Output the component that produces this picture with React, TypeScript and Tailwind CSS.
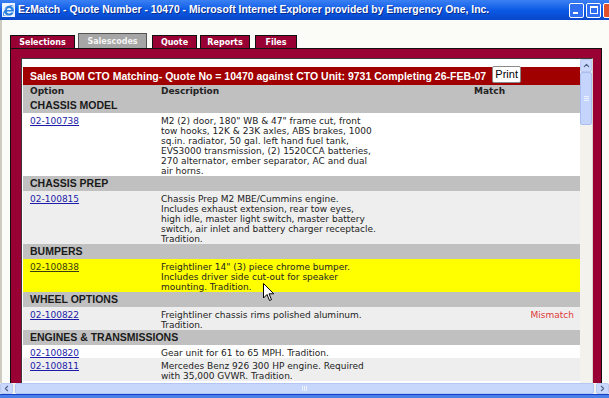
import { ChevronUp, ChevronLeft, ChevronRight } from "lucide-react";
import { FaInternetExplorer } from "react-icons/fa";

type Item = { code: string; lines: string[]; bg: string; link: string; match?: string };
type Section = { title: string; items: Item[] };

const sections: Section[] = [
  {
    title: "CHASSIS MODEL",
    items: [
      {
        code: "02-100738",
        bg: "bg-white",
        link: "text-[#1c1ca8]",
        lines: [
          'M2 (2) door, 180" WB & 47" frame cut, front',
          "tow hooks, 12K & 23K axles, ABS brakes, 1000",
          "sq.in. radiator, 50 gal. left hand fuel tank,",
          "EVS3000 transmission, (2) 1520CCA batteries,",
          "270 alternator, ember separator, AC and dual",
          "air horns.",
        ],
      },
    ],
  },
  {
    title: "CHASSIS PREP",
    items: [
      {
        code: "02-100815",
        bg: "bg-[#eeeeee]",
        link: "text-[#1c1ca8]",
        lines: [
          "Chassis Prep M2 MBE/Cummins engine.",
          "Includes exhaust extension, rear tow eyes,",
          "high idle, master light switch, master battery",
          "switch, air inlet and battery charger receptacle.",
          "Tradition.",
        ],
      },
    ],
  },
  {
    title: "BUMPERS",
    items: [
      {
        code: "02-100838",
        bg: "bg-[#ffff00]",
        link: "text-[#3a3a10]",
        lines: [
          'Freightliner 14" (3) piece chrome bumper.',
          "Includes driver side cut-out for speaker",
          "mounting. Tradition.",
        ],
      },
    ],
  },
  {
    title: "WHEEL OPTIONS",
    items: [
      {
        code: "02-100822",
        bg: "bg-[#eeeeee]",
        link: "text-[#1c1ca8]",
        match: "Mismatch",
        lines: ["Freightliner chassis rims polished aluminum.", "Tradition."],
      },
    ],
  },
  {
    title: "ENGINES & TRANSMISSIONS",
    items: [
      {
        code: "02-100820",
        bg: "bg-white",
        link: "text-[#1c1ca8]",
        lines: ["Gear unit for 61 to 65 MPH. Tradition."],
      },
      {
        code: "02-100811",
        bg: "bg-[#eeeeee]",
        link: "text-[#1c1ca8]",
        lines: ["Mercedes Benz 926 300 HP engine. Required", "with 35,000 GVWR. Tradition."],
      },
    ],
  },
];

const tabs = [
  { label: "Selections", cls: "w-[65px]" },
  { label: "Salescodes", cls: "ml-[3px] w-[69px]", active: true },
  { label: "Quote", cls: "ml-[5px] w-[45px]" },
  { label: "Reports", cls: "ml-[3px] w-[50px]" },
  { label: "Files", cls: "ml-[5px] w-[42px]" },
];

function Row({ item }: { item: Item }) {
  return (
    <div className={`grid grid-cols-[138px_313px_1fr] pt-[3px] text-[9px] leading-[10px] ${item.bg}`}>
      <div className="pl-[7px]">
        <a className={`underline ${item.link}`}>{item.code}</a>
      </div>
      <div className="text-[#222]">
        {item.lines.map((l, i) => (
          <div key={i} className="whitespace-nowrap">{l}</div>
        ))}
      </div>
      <div className="pr-[6px] text-right text-[#e03a3a]">{item.match}</div>
    </div>
  );
}

export default function App() {
  return (
    <div className="relative flex h-[398px] w-[609px] flex-col overflow-hidden bg-[#fbfbf8] font-['DejaVu_Sans',sans-serif]">
      {/* Title bar */}
      <div className="flex h-[20px] shrink-0 items-center bg-gradient-to-b from-[#3a80f3] via-[#0b5ae6] to-[#0847c9] pl-[2px]">
        <div className="flex h-[14px] w-[13px] items-center justify-center bg-[#eef4ff]">
          <FaInternetExplorer className="text-[#2b7fe0]" size={11} />
        </div>
        <span className="ml-[3px] whitespace-nowrap font-['Liberation_Sans',sans-serif] text-[10.4px] font-bold text-white [text-shadow:1px_1px_0_#0a2a8a]">
          EzMatch - Quote Number - 10470 - Microsoft Internet Explorer provided by Emergency One, Inc.
        </span>
        <div className="-mr-[9px] ml-auto flex items-center gap-[2px]">
          <div className="flex h-[15px] w-[15px] items-end rounded-[2px] border border-white bg-[#2f6ff0] pb-[3px] pl-[3px]">
            <div className="h-[2px] w-[5px] bg-white" />
          </div>
          <div className="flex h-[15px] w-[15px] items-center justify-center rounded-[2px] border border-white bg-[#2f6ff0]">
            <div className="h-[8px] w-[8px] border border-t-2 border-white" />
          </div>
          <div className="h-[15px] w-[15px] rounded-[2px] border border-white bg-[#e0512c]" />
        </div>
      </div>

      {/* Window body */}
      <div className="flex min-h-0 flex-1 flex-col border-l-2 border-[#cfcbc0] pl-[8px] pt-[13px]">
        {/* Tabs */}
        <div className="flex h-[15px] shrink-0 items-end">
          {tabs.map((t) =>
            t.active ? (
              <div
                key={t.label}
                className={`flex h-[15px] items-start justify-center border border-b-0 border-[#555] bg-[#a6a6a6] pt-[2px] text-[8px] font-bold text-[#f4f4f4] ${t.cls}`}
              >
                {t.label}
              </div>
            ) : (
              <div
                key={t.label}
                className={`flex h-[13px] items-center justify-center border border-b-0 border-[#111] bg-[#990033] pt-[1px] text-[8px] font-bold text-white ${t.cls}`}
              >
                {t.label}
              </div>
            )
          )}
        </div>

        {/* Maroon panel */}
        <div className="min-h-0 w-[592px] flex-1 overflow-hidden border border-b-0 border-[#111] bg-[#990033] pl-[10px] pt-[9px]">
          <div className="flex h-[400px] w-[572px] border-l border-t border-r border-[#3a3a3a] border-r-[#d8d4cc] bg-white">
            {/* Table */}
            <div className="ml-[1px] w-[557px] pt-[8px]">
              <div className="flex h-[18px] items-start bg-[#a00000] pl-[7px]">
                <span className="mt-[2px] whitespace-nowrap font-['Liberation_Sans',sans-serif] text-[10.5px] font-bold text-white">
                  Sales BOM CTO Matching- Quote No = 10470 against CTO Unit: 9731 Completing 26-FEB-07
                </span>
                <button className="-mt-[1px] ml-[6px] flex h-[17px] w-[29px] items-center justify-center rounded-[2px] border border-[#8a8a8a] bg-white font-['Liberation_Sans',sans-serif] text-[11px] text-black">
                  Print
                </button>
              </div>
              <div className="grid h-[13px] grid-cols-[138px_313px_1fr] items-center bg-[#c0c0c0] text-[9px] font-bold text-[#222]">
                <div className="pl-[7px]">Option</div>
                <div>Description</div>
                <div>Match</div>
              </div>
              {sections.map((s) => (
                <div key={s.title}>
                  <div className="flex h-[15px] items-center bg-[#c0c0c0] pl-[7px] font-['Liberation_Sans',sans-serif] text-[10.5px] font-bold text-[#1a1a1a]">
                    {s.title}
                  </div>
                  {s.items.map((it) => (
                    <Row key={it.code} item={it} />
                  ))}
                </div>
              ))}
            </div>

            {/* Vertical scrollbar */}
            <div className="flex w-[12px] flex-col bg-[#f3f2ec]">
              <div className="flex h-[13px] items-center justify-center rounded-[2px] border border-[#b9c9f0] bg-[#c9d8fc]">
                <ChevronUp size={9} strokeWidth={3} className="text-[#4d6185]" />
              </div>
              <div className="flex h-[53px] flex-col items-center justify-center gap-[1px] rounded-[2px] border border-[#a9bdf0] bg-[#c4d4fb]">
                <div className="h-px w-[5px] bg-[#eef3ff]" />
                <div className="h-px w-[5px] bg-[#eef3ff]" />
                <div className="h-px w-[5px] bg-[#eef3ff]" />
              </div>
            </div>
          </div>
        </div>
      </div>

      {/* Horizontal scrollbar */}
      <div className="flex h-[11px] shrink-0 bg-[#f3f2ec]">
        <div className="flex w-[13px] items-center justify-center rounded-[2px] border border-[#b9c9f0] bg-[#c9d8fc]">
          <ChevronLeft size={9} strokeWidth={3} className="text-[#4d6185]" />
        </div>
        <div className="mx-[2px] flex flex-1 items-center justify-center gap-[1px] rounded-[2px] border border-[#b4c7f4] bg-[#c7d7fb]">
          <div className="h-[5px] w-px bg-[#eef3ff]" />
          <div className="h-[5px] w-px bg-[#eef3ff]" />
          <div className="h-[5px] w-px bg-[#eef3ff]" />
        </div>
        <div className="flex w-[13px] items-center justify-center rounded-[2px] border border-[#b9c9f0] bg-[#c9d8fc]">
          <ChevronRight size={9} strokeWidth={3} className="text-[#4d6185]" />
        </div>
      </div>

      {/* Window bottom frame */}
      <div className="h-[4px] shrink-0 border-t border-[#1440c8] bg-[#4a7ee8]" />

      {/* Mouse pointer */}
      <svg className="absolute left-[263px] top-[283px]" width="12" height="19" viewBox="0 0 12 19">
        <path d="M0.5 0.5 L0.5 15 L4 11.5 L6.5 17.5 L8.5 16.6 L6 10.8 L10.8 10.8 Z" fill="white" stroke="black" strokeWidth="1" />
      </svg>
    </div>
  );
}
